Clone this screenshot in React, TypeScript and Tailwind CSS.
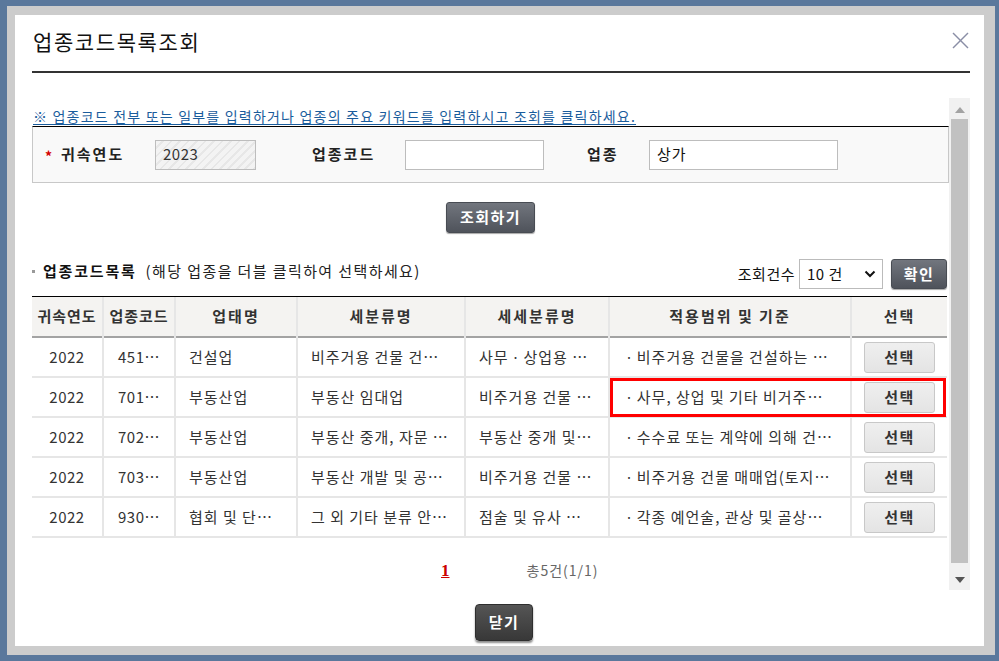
import React from "react";

type Row = {
  year: string;
  code: string;
  biz: string;
  sub: string;
  subsub: string;
  scope: string;
};

const rows: Row[] = [
  {
    year: "2022",
    code: "451…",
    biz: "건설업",
    sub: "비주거용 건물 건…",
    subsub: "사무ㆍ상업용 …",
    scope: "ㆍ비주거용 건물을 건설하는 …",
  },
  {
    year: "2022",
    code: "701…",
    biz: "부동산업",
    sub: "부동산 임대업",
    subsub: "비주거용 건물 …",
    scope: "ㆍ사무, 상업 및 기타 비거주…",
  },
  {
    year: "2022",
    code: "702…",
    biz: "부동산업",
    sub: "부동산 중개, 자문 …",
    subsub: "부동산 중개 및…",
    scope: "ㆍ수수료 또는 계약에 의해 건…",
  },
  {
    year: "2022",
    code: "703…",
    biz: "부동산업",
    sub: "부동산 개발 및 공…",
    subsub: "비주거용 건물 …",
    scope: "ㆍ비주거용 건물 매매업(토지…",
  },
  {
    year: "2022",
    code: "930…",
    biz: "협회 및 단…",
    sub: "그 외 기타 분류 안…",
    subsub: "점술 및 유사 …",
    scope: "ㆍ각종 예언술, 관상 및 골상…",
  },
];

const headers = ["귀속연도", "업종코드", "업태명", "세분류명", "세세분류명", "적용범위 및 기준", "선택"];
const colWidths = [71, 72, 122, 168, 144, 242, 96];

const darkBtn =
  "flex items-center justify-center rounded-[3px] border border-[#484c53] bg-gradient-to-b from-[#72767e] to-[#4f535b] text-white font-bold text-[15px] tracking-[1.5px] shadow-[0_1px_1px_rgba(0,0,0,0.35)]";

const cellText = "pl-[13px] whitespace-nowrap overflow-hidden border-l-2 border-[#e6e6e6] tracking-[1px]";

const App = () => {
  return (
    <div
      className="w-[999px] h-[661px] bg-[#5a789c] pt-[6px] pl-[7px] overflow-hidden"
      style={{ fontFamily: '"Noto Sans CJK KR", "Noto Sans", sans-serif' }}
    >
      <div className="w-[988px] h-[649px] bg-[#cccccc] pt-[9px] pl-[8px] pr-[11px] pb-[9px]">
        <div className="w-full h-full bg-white pl-[17px] pr-[14px] flex flex-col">
          {/* title */}
          <div className="h-[56px] flex items-center justify-between pb-[4px]">
            <div className="pl-[1px] text-[21px] leading-[26px] tracking-[1.6px] text-[#111]">업종코드목록조회</div>
            <svg width="17" height="17" viewBox="0 0 17 17" className="mr-[1px] mt-[-1px]">
              <line x1="1" y1="1" x2="16" y2="16" stroke="#8a8ea6" strokeWidth="1.4" />
              <line x1="16" y1="1" x2="1" y2="16" stroke="#8a8ea6" strokeWidth="1.4" />
            </svg>
          </div>
          <div className="h-[2px] bg-[#333]" />

          {/* scroll area */}
          <div className="mt-[25px] h-[492px] flex">
            <div className="w-[917px] h-full overflow-hidden">
              <div className="h-[28px] pt-[9px] pl-[1px] text-[14px] leading-[18px] tracking-[1.2px] text-[#1a5c9c] underline underline-offset-[2px] whitespace-nowrap">
                ※ 업종코드 전부 또는 일부를 입력하거나 업종의 주요 키워드를 입력하시고 조회를 클릭하세요.
              </div>

              {/* search box */}
              <div className="h-[57px] border border-[#c8c8c8] border-t-black bg-[#f9f9f9] flex items-center text-[15px] text-[#222]">
                <span className="ml-[12px] w-[16px] text-[#d40000] font-bold text-[14px] leading-none pt-[2px]">*</span>
                <span className="w-[94px] font-bold tracking-[2px]">귀속연도</span>
                <div className="w-[101px] h-[30px] border border-[#bdbdbd] bg-[repeating-linear-gradient(135deg,#f3f3f3_0px,#f3f3f3_4px,#e7e7e7_4px,#e7e7e7_6px)] flex items-center pl-[7px] text-[#333] tracking-[0.5px]">
                  2023
                </div>
                <span className="ml-[56px] w-[93px] font-bold tracking-[2px]">업종코드</span>
                <div className="w-[139px] h-[30px] border border-[#bdbdbd] bg-white" />
                <span className="ml-[43px] w-[62px] font-bold tracking-[2px]">업종</span>
                <div className="w-[189px] h-[30px] border border-[#bdbdbd] bg-white flex items-center pl-[7px] text-[#111] tracking-[1px]">
                  상가
                </div>
              </div>

              <div className="mt-[19px] flex justify-center">
                <button className={`${darkBtn} w-[89px] h-[31px]`}>조회하기</button>
              </div>

              {/* list header */}
              <div className="mt-[26px] h-[30px] flex items-center justify-between w-[915px]">
                <div className="flex items-center pb-[5px] text-[15px] text-[#222]">
                  <span className="w-[3px] h-[3px] bg-[#999] mr-[8px]" />
                  <span className="font-bold tracking-[1.8px] text-[#111]">업종코드목록</span>
                  <span className="ml-[9px] tracking-[1.4px]">(해당 업종을 더블 클릭하여 선택하세요)</span>
                </div>
                <div className="flex items-center">
                  <span className="text-[15px] text-[#111] mr-[4px] tracking-[0.5px]">조회건수</span>
                  <div className="w-[84px] h-[30px] border border-[#bbb] bg-white flex items-center justify-between pl-[7px] pr-[6px] text-[15px] text-[#111]">
                    <span className="tracking-[0.5px]">10 건</span>
                    <svg width="12" height="8" viewBox="0 0 12 8">
                      <path d="M1.5 1.5 L6 6 L10.5 1.5" fill="none" stroke="#111" strokeWidth="2" />
                    </svg>
                  </div>
                  <button className={`${darkBtn} ml-[8px] w-[56px] h-[30px]`}>확인</button>
                </div>
              </div>

              {/* table */}
              <div className="mt-[7px] relative w-[915px] border-t border-black">
                <table className="w-[915px] table-fixed border-collapse text-[15px] text-[#333]">
                  <colgroup>
                    {colWidths.map((w, i) => (
                      <col key={i} style={{ width: w }} />
                    ))}
                  </colgroup>
                  <thead>
                    <tr className="h-[40px] bg-[#f4f3f1] border-b-2 border-[#a3a3a3]">
                      {headers.map((h, i) => (
                        <th
                          key={h}
                          className={`font-bold text-center text-[#333] whitespace-nowrap ${
                            i === 0 ? "" : "border-l-2 border-[#e6e6e6]"
                          } ${i < 2 ? "tracking-[1px]" : "tracking-[2px]"}`}
                        >
                          {h}
                        </th>
                      ))}
                    </tr>
                  </thead>
                  <tbody>
                    {rows.map((r) => (
                      <tr key={r.code} className="h-[40px] border-b-2 border-[#e6e6e6]">
                        <td className="text-center tracking-[0.5px]">{r.year}</td>
                        <td className="text-center border-l-2 border-[#e6e6e6] tracking-[0.5px]">{r.code}</td>
                        <td className={cellText}>{r.biz}</td>
                        <td className={cellText}>{r.sub}</td>
                        <td className={cellText}>{r.subsub}</td>
                        <td className={`${cellText} !pl-[12px]`}>{r.scope}</td>
                        <td className="border-l-2 border-[#e6e6e6]">
                          <div className="flex justify-center">
                            <button className="w-[71px] h-[31px] rounded-[3px] border border-[#c8c8c8] bg-gradient-to-b from-[#efefef] to-[#e4e4e4] font-bold text-[15px] tracking-[1.5px] text-[#333]">
                              선택
                            </button>
                          </div>
                        </td>
                      </tr>
                    ))}
                  </tbody>
                </table>
                <div className="absolute top-[81px] left-[578px] w-[336px] h-[39px] border-[3px] border-[#ff0000] pointer-events-none" />
              </div>

              {/* paging */}
              <div className="mt-[22px] h-[20px] flex items-center ml-[409px]">
                <span
                  className="text-[17px] font-bold text-[#cc0000] underline leading-none"
                  style={{ fontFamily: '"Liberation Serif", serif' }}
                >
                  1
                </span>
                <span className="ml-[77px] text-[14px] text-[#666] tracking-[1px]">총5건(1/1)</span>
              </div>
            </div>

            {/* scrollbar */}
            <div className="w-[21px] h-full bg-[#f1f1f1] flex flex-col">
              <div className="h-[21px] flex justify-center pt-[9px]">
                <svg width="10" height="6" viewBox="0 0 10 6">
                  <path d="M0 6 L5 0 L10 6 Z" fill="#a3a3a3" />
                </svg>
              </div>
              <div className="h-[444px] mx-[2px] bg-[#c1c1c1]" />
              <div className="flex-1 flex justify-center pt-[14px]">
                <svg width="10" height="6" viewBox="0 0 10 6">
                  <path d="M0 0 L10 0 L5 6 Z" fill="#555" />
                </svg>
              </div>
            </div>
          </div>

          {/* close */}
          <div className="mt-[14px] ml-[443px]">
            <button className="w-[58px] h-[37px] rounded-[4px] bg-gradient-to-b from-[#555] to-[#383838] border border-[#2e2e2e] text-white font-bold text-[15px] tracking-[1.5px] shadow-[0_2px_2px_rgba(0,0,0,0.45)]">
              닫기
            </button>
          </div>
        </div>
      </div>
    </div>
  );
};

export default App;
